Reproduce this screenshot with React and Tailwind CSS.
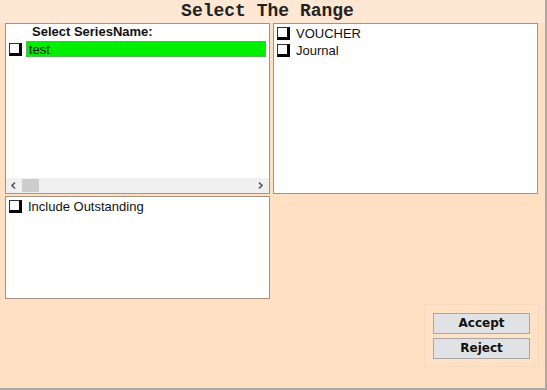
import React from 'react';

function Check() {
  return (
    <div className="w-[13px] h-[13px] shrink-0 bg-white border-t border-l border-[#333] border-b-[3px] border-r-[3px] border-b-black border-r-black" />
  );
}

function Row({ label }) {
  return (
    <div className="flex items-center gap-[6px] h-[17px]">
      <Check />
      <span className="text-[13px] text-[#111] leading-none">{label}</span>
    </div>
  );
}

export default function App() {
  return (
    <div
      className="w-[547px] h-[390px] bg-[#ffe0c3] border-r-2 border-b-2 border-[#a9a9a9] flex flex-col overflow-hidden"
      style={{ fontFamily: '"Liberation Sans", Arial, sans-serif' }}
    >
      {/* Title */}
      <div className="h-[23px] bg-[#fde6d2] flex items-center justify-center pr-[10px] pb-[1px]">
        <span className="text-[18px] font-bold text-[#222] leading-none" style={{ fontFamily: '"Liberation Mono", monospace' }}>
          Select The Range
        </span>
      </div>

      <div className="flex gap-[3px] pl-[5px]">
        {/* Series list */}
        <div className="w-[265px] h-[171px] bg-white border border-[#a39382] flex flex-col">
          <div className="flex-1 pl-[3px] pr-[3px] pt-[1px]">
            <div className="pl-[23px] text-[13px] font-bold text-[#111] leading-[14px]">Select SeriesName:</div>
            <div className="flex items-center gap-[4px] mt-[2px]">
              <Check />
              <div className="flex-1 h-[16px] bg-[#00ee00] border border-[#52b852] flex items-center pl-[2px] text-[13px] text-[#111] leading-none">
                test
              </div>
            </div>
          </div>
          <div className="h-[15px] bg-[#f0f0f0] flex items-center">
            <svg width="16" height="15" viewBox="0 0 16 15" className="shrink-0">
              <path d="M9 4.5 L6 7.5 L9 10.5" stroke="#555" strokeWidth="1.6" fill="none" />
            </svg>
            <div className="w-[17px] h-[13px] bg-[#cdcdcd]" />
            <div className="flex-1" />
            <svg width="16" height="15" viewBox="0 0 16 15" className="shrink-0">
              <path d="M6 4.5 L9 7.5 L6 10.5" stroke="#555" strokeWidth="1.6" fill="none" />
            </svg>
          </div>
        </div>

        {/* Type list */}
        <div className="w-[265px] h-[171px] bg-white border border-[#a39382] pl-[3px] pt-[1px] flex flex-col">
          <Row label="VOUCHER" />
          <Row label="Journal" />
        </div>
      </div>

      <div className="flex gap-[3px] pl-[5px] mt-[2px]">
        <div className="w-[265px] h-[103px] bg-white border border-[#a39382] pl-[3px] pt-[1px] self-start">
          <Row label="Include Outstanding" />
        </div>

        <div className="w-[266px] h-[171px] flex flex-col justify-end items-end">
          <div className="w-[115px] h-[63px] border border-[#f7d9bd] bg-[#ffe2c6] flex flex-col items-center justify-center gap-[4px]">
            <button className="w-[97px] h-[21px] bg-[#e1e2e6] border border-[#a7a7a7] font-bold text-[#111]" style={{ fontFamily: '"DejaVu Sans", Tahoma, sans-serif', fontSize: 12 }}>
              Accept
            </button>
            <button className="w-[97px] h-[21px] bg-[#e1e2e6] border border-[#a7a7a7] font-bold text-[#111]" style={{ fontFamily: '"DejaVu Sans", Tahoma, sans-serif', fontSize: 12 }}>
              Reject
            </button>
          </div>
        </div>
      </div>
    </div>
  );
}
